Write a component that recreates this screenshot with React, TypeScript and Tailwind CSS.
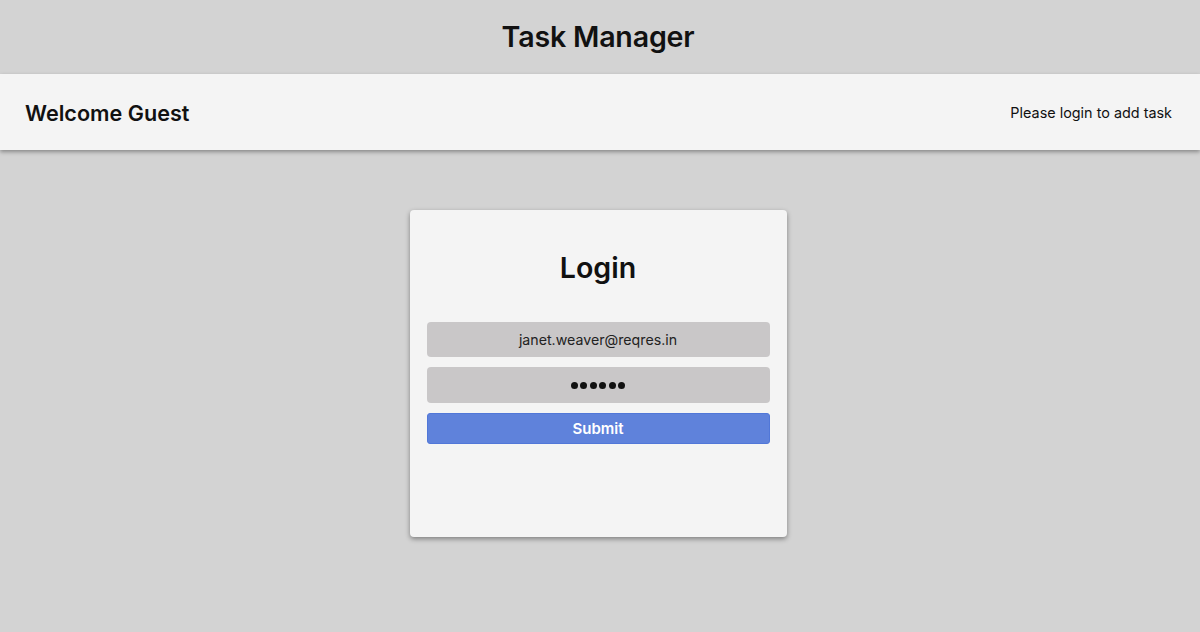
import React from "react";

export default function App() {
  return (
    <div
      className="min-h-[632px] w-full bg-[#d3d3d3] text-[#111]"
      style={{ fontFamily: "Inter, 'Noto Sans', sans-serif" }}
    >
      <div className="h-[74px] flex items-center justify-center pr-[4px]">
        <h1 className="text-[28.6px] font-semibold tracking-[-0.2px]">Task Manager</h1>
      </div>
      <div className="h-[76px] bg-[#f4f4f4] flex items-center justify-between pl-[25px] pr-[28px] shadow-[0_2px_4px_rgba(0,0,0,0.35)]">
        <span className="text-[21.6px] font-semibold pt-[2px]">Welcome Guest</span>
        <span className="text-[14.4px] pt-[2px]">Please login to add task</span>
      </div>
      <div className="flex justify-center pt-[60px] pr-[4px]">
        <div className="w-[377px] h-[327px] bg-[#f4f4f4] rounded-[4px] shadow-[0_2px_5px_rgba(0,0,0,0.4)] px-[17px] flex flex-col">
          <h2 className="text-[28.6px] font-semibold text-center mt-[40px] leading-[36px]">Login</h2>
          <div className="flex flex-col mt-[36px] gap-[10px]">
            <div className="h-[35px] bg-[#c9c7c8] rounded-[4px] flex items-center justify-center text-[14.2px] text-[#222]">
              janet.weaver@reqres.in
            </div>
            <div className="h-[36px] bg-[#c9c7c8] rounded-[4px] flex items-center justify-center gap-[2.5px]">
              {[0, 1, 2, 3, 4, 5].map((i) => (
                <span key={i} className="w-[7px] h-[7px] rounded-full bg-[#111]" />
              ))}
            </div>
            <button className="h-[31px] bg-[#5f82db] border border-[#5177d8] rounded-[3px] text-white text-[15px] font-semibold pt-[2px]">
              Submit
            </button>
          </div>
        </div>
      </div>
    </div>
  );
}
